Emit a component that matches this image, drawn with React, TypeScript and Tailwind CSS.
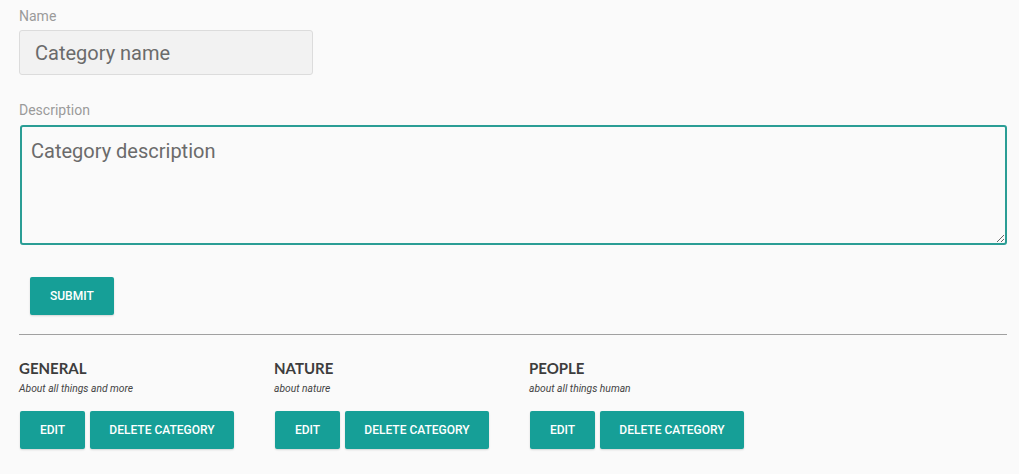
import React from 'react';

const categories = [
  { name: 'GENERAL', description: 'About all things and more' },
  { name: 'NATURE', description: 'about nature' },
  { name: 'PEOPLE', description: 'about all things human' },
];

const btn =
  'h-[38px] whitespace-nowrap rounded-[2px] bg-[#169f97] text-[12px] font-medium uppercase text-white shadow-[0_1px_2px_rgba(0,0,0,0.15)]';

export default function App() {
  return (
    <div className="min-h-[474px] bg-[#fafafa] font-['Roboto',sans-serif]">
      <div className="w-[1007px] pl-[19px] pt-[8px]">
        {/* Name */}
        <label className="block text-[14px] leading-[16px] text-[#9a9a9a]">Name</label>
        <input
          placeholder="Category name"
          className="mt-[6px] h-[45px] w-[294px] rounded-[3px] border border-[#dcdcdc] bg-[#f2f2f2] px-[15px] text-[20px] text-[#555] outline-none placeholder:text-[#6b6b6b]"
        />

        {/* Description */}
        <label className="mt-[27px] block text-[14px] leading-[16px] text-[#9a9a9a]">Description</label>
        <textarea
          placeholder="Category description"
          className="ml-px mt-[7px] block h-[120px] w-[987px] rounded-[3px] border-2 border-[#2a9d95] bg-[#fafafa] px-[9px] pt-[11px] text-[20px] leading-[26px] text-[#555] outline-none placeholder:text-[#6b6b6b]"
        />

        <button className={`${btn} ml-[11px] mt-[32px] h-[37px] px-[20px]`}>Submit</button>

        <hr className="mt-[19px] border-t border-[#a0a0a0]" />

        {/* Categories */}
        <div className="mt-[23px] flex">
          {categories.map((c) => (
            <div key={c.name} className="w-[255px]">
              <h3 className="font-['Lato',sans-serif] text-[15px] font-bold leading-[20px] text-[#3d3d3d]">
                {c.name}
              </h3>
              <p className="mt-[4px] text-[10.3px] italic leading-[14px] text-[#444]">{c.description}</p>
              <div className="ml-px mt-[15px] flex gap-[5px]">
                <button className={`${btn} w-[65px]`}>Edit</button>
                <button className={`${btn} w-[144px]`}>Delete category</button>
              </div>
            </div>
          ))}
        </div>
      </div>
    </div>
  );
}
